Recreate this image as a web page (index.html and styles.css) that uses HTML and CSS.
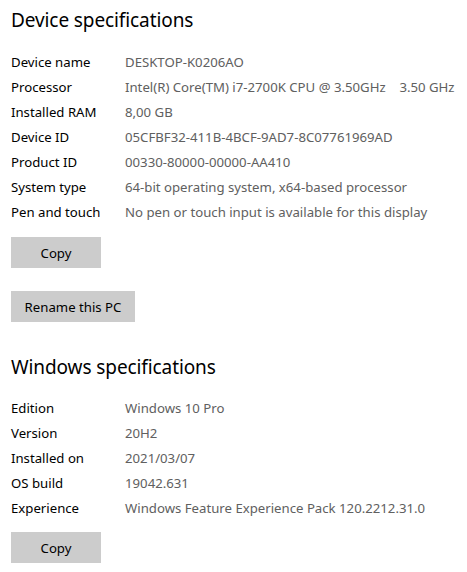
FILE: index.html
```html
<!DOCTYPE html>
<html>
<head>
<meta charset="utf-8">
<link rel="stylesheet" href="styles.css">
</head>
<body>
<div class="page">
  <h2 class="title first">Device specifications</h2>
  <div class="specs">
    <div class="row"><span class="label">Device name</span><span class="value">DESKTOP-K0206AO</span></div>
    <div class="row"><span class="label">Processor</span><span class="value">Intel(R) Core(TM) i7-2700K CPU @ 3.50GHz&nbsp;&nbsp;&nbsp;&nbsp;3.50 GHz</span></div>
    <div class="row"><span class="label">Installed RAM</span><span class="value">8,00 GB</span></div>
    <div class="row"><span class="label">Device ID</span><span class="value">05CFBF32-411B-4BCF-9AD7-8C07761969AD</span></div>
    <div class="row"><span class="label">Product ID</span><span class="value">00330-80000-00000-AA410</span></div>
    <div class="row"><span class="label">System type</span><span class="value">64-bit operating system, x64-based processor</span></div>
    <div class="row"><span class="label">Pen and touch</span><span class="value">No pen or touch input is available for this display</span></div>
  </div>
  <button class="btn copy">Copy</button>
  <button class="btn rename">Rename this PC</button>
  <h2 class="title second">Windows specifications</h2>
  <div class="specs">
    <div class="row"><span class="label">Edition</span><span class="value">Windows 10 Pro</span></div>
    <div class="row"><span class="label">Version</span><span class="value">20H2</span></div>
    <div class="row"><span class="label">Installed on</span><span class="value">2021/03/07</span></div>
    <div class="row"><span class="label">OS build</span><span class="value">19042.631</span></div>
    <div class="row"><span class="label">Experience</span><span class="value">Windows Feature Experience Pack 120.2212.31.0</span></div>
  </div>
  <button class="btn copy last">Copy</button>
</div>
</body>
</html>
```
FILE: styles.css
```css
html, body {
  margin: 0;
  padding: 0;
  background: #ffffff;
}
.page {
  padding: 0 0 0 11px;
  font-family: "Noto Sans", "Open Sans", sans-serif;
  color: #000;
  display: flex;
  flex-direction: column;
  align-items: flex-start;
}
.title {
  font-weight: 400;
  font-size: 19px;
  line-height: 28px;
  margin: 0;
  color: #000;
  letter-spacing: -0.1px;
}
.title.first {
  margin-top: 6px;
  margin-bottom: 15px;
}
.title.second {
  margin-top: 31px;
  margin-bottom: 14px;
}
.specs {
  display: flex;
  flex-direction: column;
}
.row {
  display: flex;
  height: 25px;
  align-items: center;
  font-size: 13.2px;
  white-space: nowrap;
}
.label {
  width: 114px;
  color: #000;
}
.value {
  color: #606060;
}
.btn {
  font-family: "Noto Sans", "Open Sans", sans-serif;
  font-size: 13.2px;
  color: #000;
  background: #cccccc;
  border: none;
  height: 31px;
  padding: 0;
  margin: 0;
}
.btn.copy {
  width: 90px;
  margin-top: 13px;
}
.btn.rename {
  width: 124px;
  margin-top: 23px;
}
.btn.copy.last {
  margin-top: 12px;
}
```
